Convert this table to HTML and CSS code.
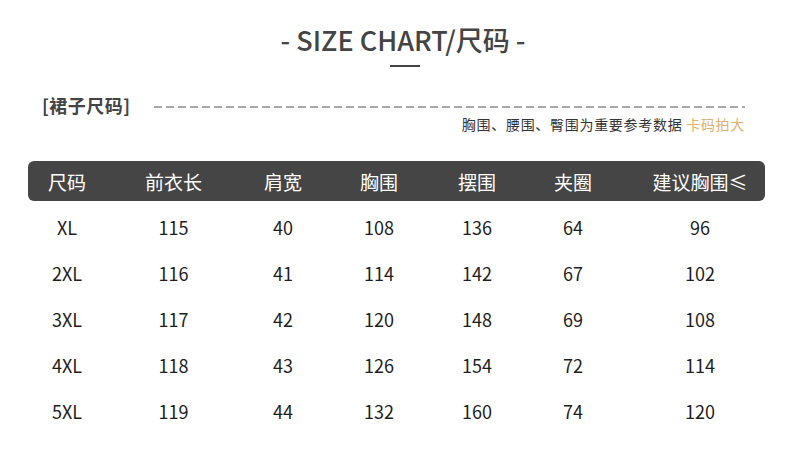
FILE: index.html
```html
<!DOCTYPE html>
<html lang="zh">
<head>
<meta charset="utf-8">
<link rel="stylesheet" href="styles.css">
</head>
<body>
<div class="page">
  <h1 class="title">- SIZE CHART/尺码 -</h1>
  <div class="title-bar"></div>
  <div class="section">
    <span class="label">[裙子尺码]</span>
    <span class="dash"></span>
  </div>
  <p class="note">胸围、腰围、臀围为重要参考数据 <span class="hl">卡码拍大</span></p>
  <div class="table">
    <div class="row head">
      <div>尺码</div><div>前衣长</div><div>肩宽</div><div>胸围</div><div>摆围</div><div>夹圈</div><div class="last">建议胸围≤</div>
    </div>
    <div class="row">
      <div>XL</div><div>115</div><div>40</div><div>108</div><div>136</div><div>64</div><div class="last">96</div>
    </div>
    <div class="row">
      <div>2XL</div><div>116</div><div>41</div><div>114</div><div>142</div><div>67</div><div class="last">102</div>
    </div>
    <div class="row">
      <div>3XL</div><div>117</div><div>42</div><div>120</div><div>148</div><div>69</div><div class="last">108</div>
    </div>
    <div class="row">
      <div>4XL</div><div>118</div><div>43</div><div>126</div><div>154</div><div>72</div><div class="last">114</div>
    </div>
    <div class="row">
      <div>5XL</div><div>119</div><div>44</div><div>132</div><div>160</div><div>74</div><div class="last">120</div>
    </div>
  </div>
</div>
</body>
</html>
```

FILE: styles.css
```css
html, body {
  margin: 0;
  padding: 0;
  background: #ffffff;
}
body {
  font-family: "Noto Sans CJK SC", "Noto Sans", sans-serif;
  color: #222;
}
.page {
  width: 790px;
  height: 452px;
  overflow: hidden;
}
.title {
  margin: 20px 0 0;
  font-size: 27px;
  line-height: 40px;
  font-weight: 500;
  color: #444;
  text-align: center;
  padding-left: 16px;
}
.title-bar {
  width: 30px;
  height: 2px;
  background: #444;
  margin: 5px 0 0 390px;
}
.section {
  display: flex;
  align-items: center;
  margin: 27px 0 0 42px;
  width: 703px;
  height: 22px;
}
.label {
  font-size: 18px;
  font-weight: 700;
  color: #444;
  line-height: 22px;
  letter-spacing: 0.5px;
  white-space: nowrap;
}
.dash {
  flex: 1;
  height: 2px;
  margin: 4px 0 0 23px;
  background: repeating-linear-gradient(to right, #aaa 0 8px, transparent 8px 12px);
}
.note {
  margin: -2px 0 0;
  width: 745px;
  text-align: right;
  font-size: 14px;
  line-height: 20px;
  color: #333;
  letter-spacing: 0.7px;
}
.hl {
  color: #e2b06c;
}
.table {
  margin: 27px 0 0 28px;
  width: 737px;
}
.row {
  display: grid;
  grid-template-columns: 78px 135px 84px 108px 88px 104px 140px;
  height: 46px;
  align-items: center;
  font-size: 18px;
  color: #1e1e1e;
}
.row > div {
  text-align: center;
}
.row > .last {
  padding-left: 10px;
}
.row.head {
  height: 40px;
  margin-bottom: 3px;
  background: #454545;
  border-radius: 6px;
  color: #fff;
  font-size: 19px;
}
```
